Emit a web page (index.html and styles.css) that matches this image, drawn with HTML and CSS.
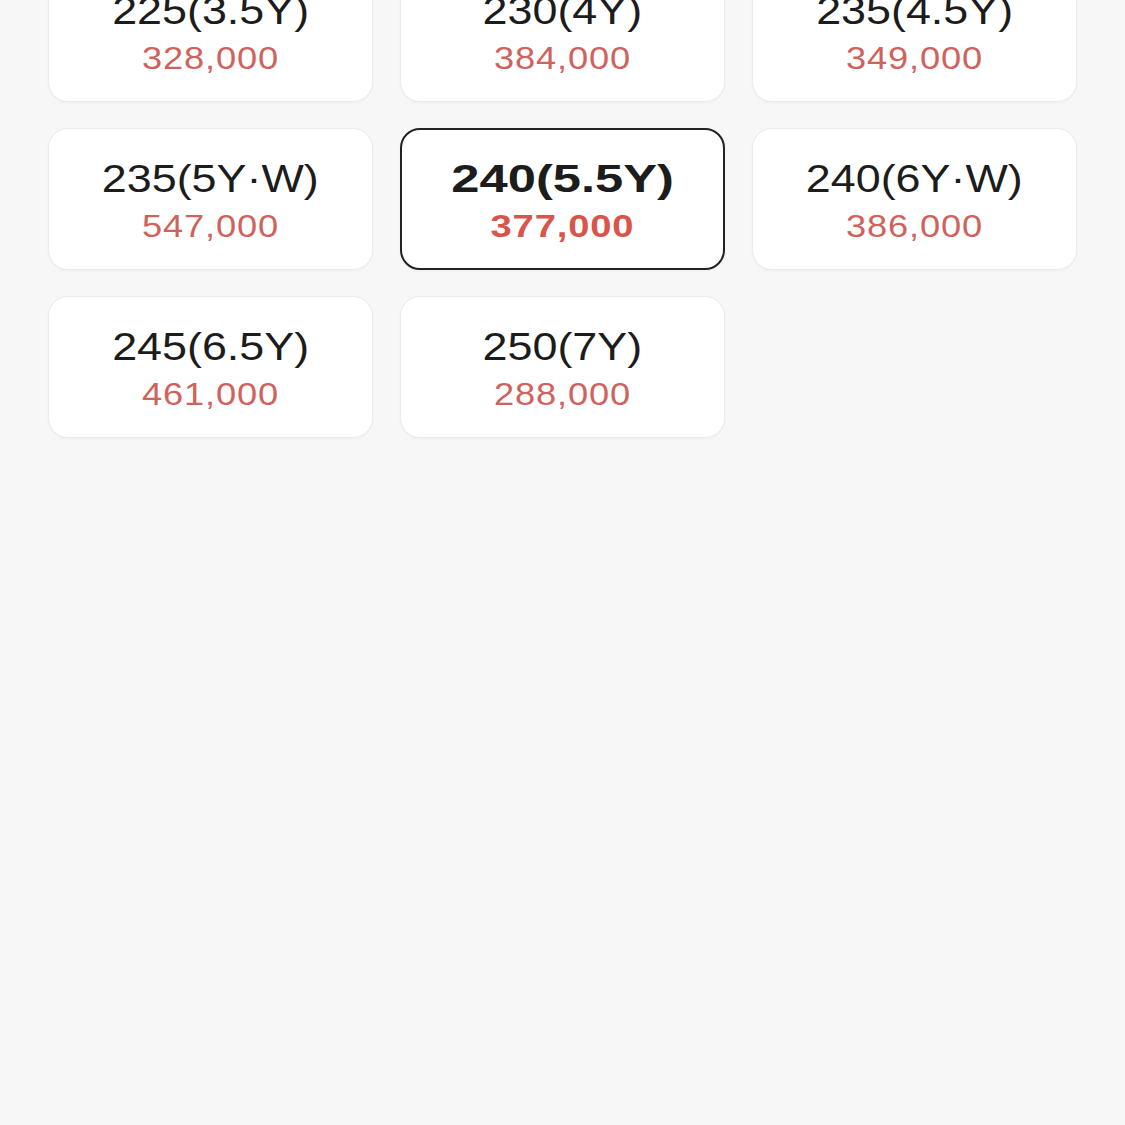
FILE: index.html
```html
<!DOCTYPE html>
<html lang="ko">
<head>
<meta charset="utf-8">
<title>Sizes</title>
<link rel="stylesheet" href="styles.css">
</head>
<body>
<div class="grid">
  <div class="card"><span class="size">225(3.5Y)</span><span class="price">328,000</span></div>
  <div class="card"><span class="size">230(4Y)</span><span class="price">384,000</span></div>
  <div class="card"><span class="size">235(4.5Y)</span><span class="price">349,000</span></div>
  <div class="card"><span class="size">235(5Y·W)</span><span class="price">547,000</span></div>
  <div class="card selected"><span class="size">240(5.5Y)</span><span class="price">377,000</span></div>
  <div class="card"><span class="size">240(6Y·W)</span><span class="price">386,000</span></div>
  <div class="card"><span class="size">245(6.5Y)</span><span class="price">461,000</span></div>
  <div class="card"><span class="size">250(7Y)</span><span class="price">288,000</span></div>
</div>
</body>
</html>
```

FILE: styles.css
```css
html, body {
  margin: 0;
  padding: 0;
  background: #f7f7f7;
  height: 100%;
  overflow: hidden;
}

body {
  font-family: "Liberation Sans", Arial, sans-serif;
}

.grid {
  display: grid;
  grid-template-columns: repeat(3, 1fr);
  grid-auto-rows: 142px;
  column-gap: 27px;
  row-gap: 26px;
  padding: 0 48px;
  margin-top: -40px;
}

.card {
  box-sizing: border-box;
  background: #ffffff;
  border: 1px solid #ebebeb;
  border-radius: 20px;
  display: flex;
  flex-direction: column;
  align-items: center;
  justify-content: center;
  gap: 8px;
  padding-top: 4px;
  box-shadow: 0 1px 3px rgba(0, 0, 0, 0.04);
}

.size {
  display: inline-block;
  font-size: 39px;
  line-height: 44px;
  color: #1c1c1c;
  transform: scaleX(1.15);
}

.price {
  display: inline-block;
  font-size: 31px;
  line-height: 36px;
  letter-spacing: 0.7px;
  color: #d0625c;
  transform: scaleX(1.17);
}

.card.selected {
  border: 2px solid #232323;
}

.card.selected .size {
  font-weight: 700;
  transform: scaleX(1.3);
}

.card.selected .price {
  font-weight: 700;
  color: #d9554c;
  transform: scaleX(1.23);
}
```
